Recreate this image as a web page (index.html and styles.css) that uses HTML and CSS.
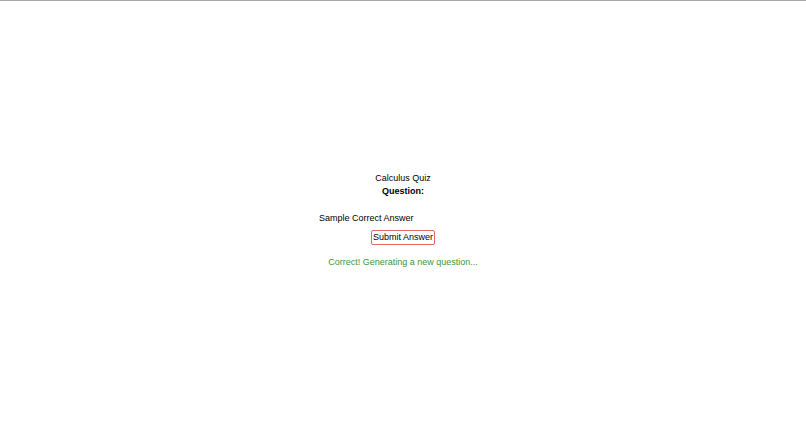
FILE: index.html
```html
<!DOCTYPE html>
<html lang="en">
<head>
<meta charset="utf-8">
<title>Calculus Quiz</title>
<link rel="stylesheet" href="styles.css">
</head>
<body>
<main class="quiz">
  <div class="title">Calculus Quiz</div>
  <div class="question">Question:</div>
  <input class="answer" type="text" value="Sample Correct Answer">
  <button class="submit" type="button">Submit Answer</button>
  <div class="feedback">Correct! Generating a new question...</div>
</main>
</body>
</html>
```

FILE: styles.css
```css
html, body {
  margin: 0;
  padding: 0;
  height: 100%;
  background: #ffffff;
}

body {
  border-top: 1px solid #a9a9a9;
  box-sizing: border-box;
  font-family: "Liberation Sans", Arial, sans-serif;
  font-size: 9px;
  color: #000;
}

.quiz {
  height: 100%;
  display: flex;
  flex-direction: column;
  align-items: center;
  justify-content: center;
  text-align: center;
}

.title,
.question,
.feedback {
  line-height: 13px;
}

.question {
  font-weight: bold;
}

.answer {
  margin-top: 14px;
  width: 172px;
  height: 13px;
  box-sizing: border-box;
  padding: 0 2px;
  border: none;
  outline: none;
  background: transparent;
  font-family: inherit;
  font-size: 9px;
  line-height: 13px;
  color: #000;
}

.submit {
  margin-top: 5px;
  height: 15px;
  padding: 0 1px;
  box-sizing: border-box;
  border: 1px solid #e06868;
  border-radius: 2px;
  background: #ffffff;
  font-family: inherit;
  font-size: 9px;
  line-height: 13px;
  color: #000;
}

.feedback {
  margin-top: 11px;
  color: #3a9a30;
}
```
